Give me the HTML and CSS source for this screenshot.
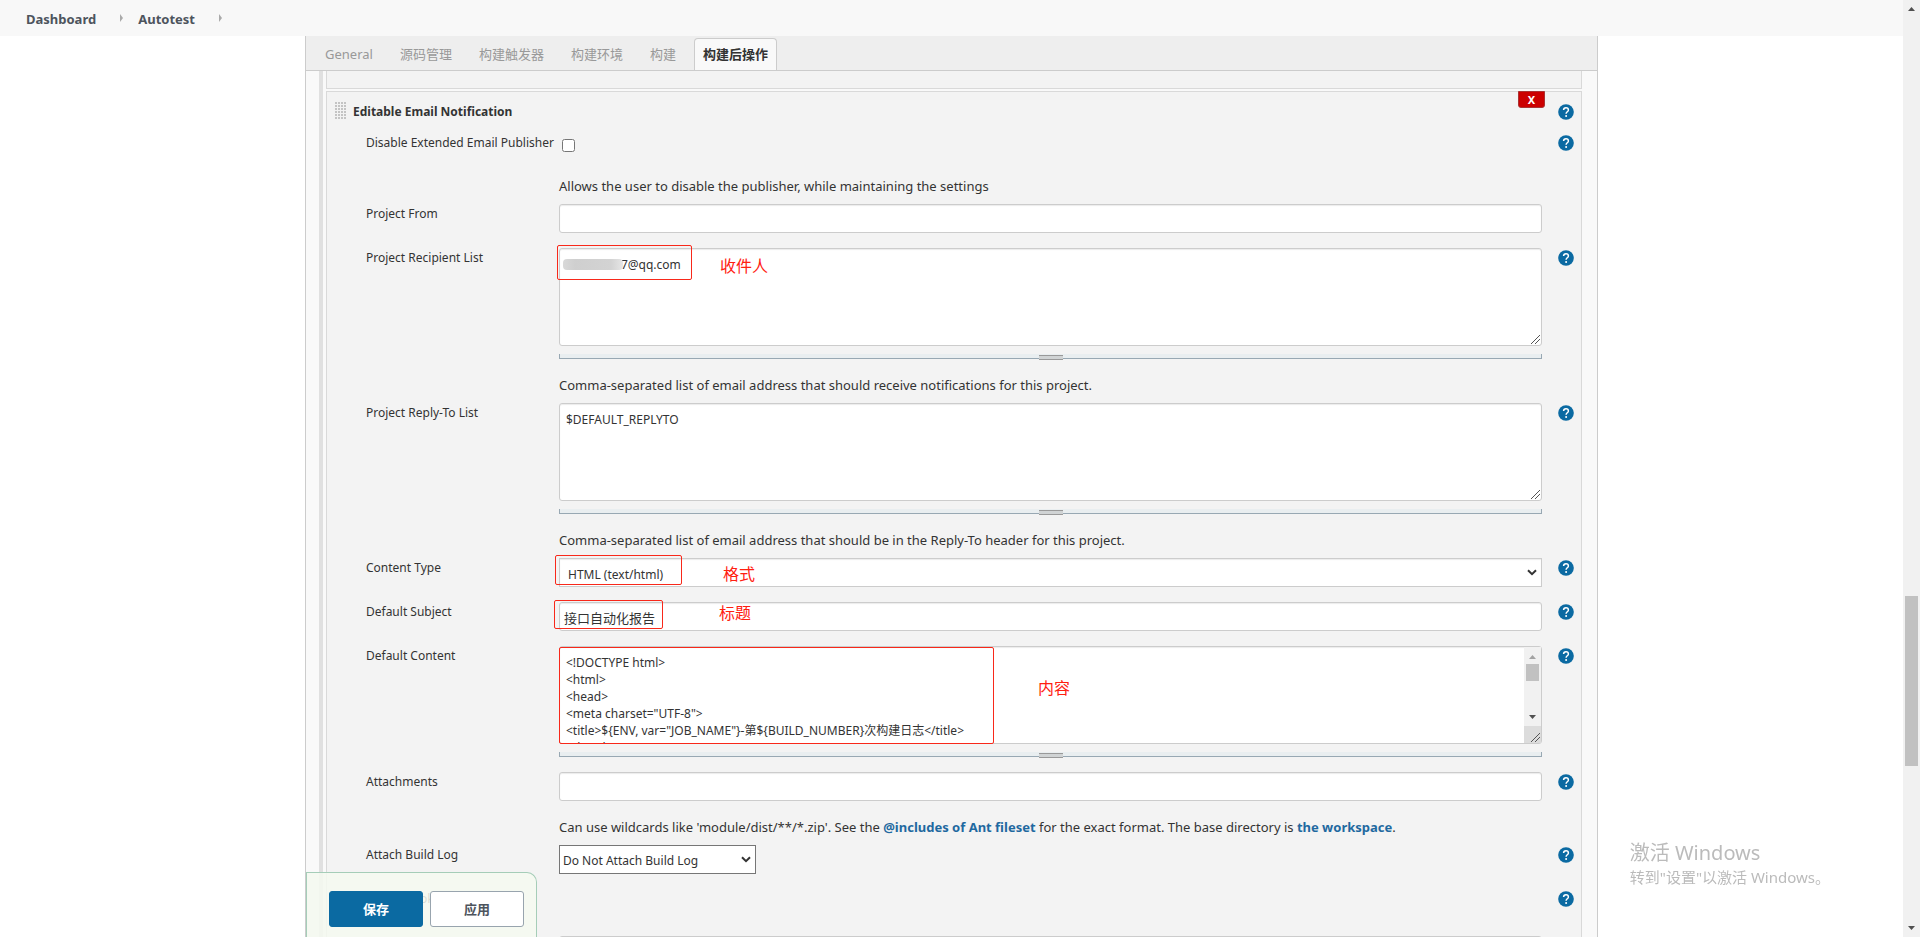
FILE: index.html
```html
<!DOCTYPE html>
<html lang="zh-CN">
<head>
    <meta charset="UTF-8">
    <meta name="viewport" content="width=device-width, initial-scale=1.0">
    <title>Autotest Config [Jenkins]</title>
    <link rel="stylesheet" href="styles.css">
</head>
<body>
    <!-- shared icons -->
    <svg class="sprite" aria-hidden="true">
        <symbol id="iconHelp" viewBox="0 0 16 16">
            <circle cx="8" cy="8" r="7.8" fill="#0b6aa2"/>
            <path d="M5.6 6.1C5.6 4.6 6.6 3.7 8 3.7s2.4.9 2.4 2.2c0 1.9-2.3 1.9-2.3 3.9" fill="none" stroke="#fff" stroke-width="1.5"/>
            <circle cx="8.1" cy="12.1" r="1" fill="#fff"/>
        </symbol>
        <symbol id="iconGrip" viewBox="0 0 9 9">
            <path d="M0 9L9 0M4 9L9 4" fill="none" stroke="#555" stroke-width="1"/>
        </symbol>
        <symbol id="iconUp" viewBox="0 0 7 4"><path d="M0 4L3.5 0L7 4z" fill="currentColor"/></symbol>
        <symbol id="iconDown" viewBox="0 0 7 4"><path d="M0 0L3.5 4L7 0z" fill="currentColor"/></symbol>
        <symbol id="iconChevron" viewBox="0 0 10 7"><path d="M1 1.2L5 5.2L9 1.2" fill="none" stroke="#333" stroke-width="2"/></symbol>
    </svg>

    <div class="page">
        <nav class="breadcrumbs">
            <a href="#">Dashboard</a>
            <span class="sep"></span>
            <a href="#">Autotest</a>
            <span class="sep"></span>
        </nav>

        <main class="config">
            <div class="tabBar">
                <a class="tab" href="#">General</a>
                <a class="tab" href="#">源码管理</a>
                <a class="tab" href="#">构建触发器</a>
                <a class="tab" href="#">构建环境</a>
                <a class="tab" href="#">构建</a>
                <a class="tab active" href="#">构建后操作</a>
            </div>

            <div class="sections">
                <div class="chunk chunkPrev"></div>

                <form class="chunk">
                    <button type="button" class="btnDelete">X</button>

                    <div class="chunkTitle">
                        <span class="dragHandle"></span>
                        <b>Editable Email Notification</b>
                        <a class="help" href="#" aria-label="Help"><svg><use href="#iconHelp"/></svg></a>
                    </div>

                    <div class="row rowCheck">
                        <label for="disabled">Disable Extended Email Publisher</label>
                        <div class="field"><input type="checkbox" id="disabled"></div>
                        <a class="help" href="#" aria-label="Help"><svg><use href="#iconHelp"/></svg></a>
                    </div>
                    <p class="desc">Allows the user to disable the publisher, while maintaining the settings</p>

                    <div class="row">
                        <label for="from">Project From</label>
                        <div class="field"><input type="text" id="from"></div>
                    </div>

                    <div class="row">
                        <label for="recipients">Project Recipient List</label>
                        <div class="field">
                            <textarea id="recipients">000000007@qq.com</textarea>
                            <svg class="grip"><use href="#iconGrip"/></svg>
                            <div class="resizer"></div>
                            <span class="mask"></span>
                            <span class="mark markRecipients"></span>
                            <span class="note noteRecipients">收件人</span>
                        </div>
                        <a class="help" href="#" aria-label="Help"><svg><use href="#iconHelp"/></svg></a>
                    </div>
                    <p class="desc">Comma-separated list of email address that should receive notifications for this project.</p>

                    <div class="row">
                        <label for="replyTo">Project Reply-To List</label>
                        <div class="field">
                            <textarea id="replyTo">$DEFAULT_REPLYTO</textarea>
                            <svg class="grip"><use href="#iconGrip"/></svg>
                            <div class="resizer"></div>
                        </div>
                        <a class="help" href="#" aria-label="Help"><svg><use href="#iconHelp"/></svg></a>
                    </div>
                    <p class="desc">Comma-separated list of email address that should be in the Reply-To header for this project.</p>

                    <div class="row">
                        <label for="contentType">Content Type</label>
                        <div class="field">
                            <select id="contentType">
                                <option>HTML (text/html)</option>
                            </select>
                            <svg class="chevron"><use href="#iconChevron"/></svg>
                            <span class="mark markType"></span>
                            <span class="note noteType">格式</span>
                        </div>
                        <a class="help" href="#" aria-label="Help"><svg><use href="#iconHelp"/></svg></a>
                    </div>

                    <div class="row">
                        <label for="subject">Default Subject</label>
                        <div class="field">
                            <input type="text" id="subject" value="接口自动化报告">
                            <span class="mark markSubject"></span>
                            <span class="note noteSubject">标题</span>
                        </div>
                        <a class="help" href="#" aria-label="Help"><svg><use href="#iconHelp"/></svg></a>
                    </div>

                    <div class="row">
                        <label for="content">Default Content</label>
                        <div class="field">
                            <textarea id="content">&lt;!DOCTYPE html&gt;
&lt;html&gt;
&lt;head&gt;
&lt;meta charset="UTF-8"&gt;
&lt;title&gt;${ENV, var="JOB_NAME"}-第${BUILD_NUMBER}次构建日志&lt;/title&gt;
&lt;/head&gt;</textarea>
                            <div class="areaScroll">
                                <svg class="arrow arrowOff"><use href="#iconUp"/></svg>
                                <span class="areaThumb"></span>
                                <svg class="arrow"><use href="#iconDown"/></svg>
                                <span class="areaCorner"></span>
                            </div>
                            <svg class="grip"><use href="#iconGrip"/></svg>
                            <div class="resizer"></div>
                            <span class="mark markContent"></span>
                            <span class="note noteContent">内容</span>
                        </div>
                        <a class="help" href="#" aria-label="Help"><svg><use href="#iconHelp"/></svg></a>
                    </div>

                    <div class="row">
                        <label for="attachments">Attachments</label>
                        <div class="field"><input type="text" id="attachments"></div>
                        <a class="help" href="#" aria-label="Help"><svg><use href="#iconHelp"/></svg></a>
                    </div>
                    <p class="desc">Can use wildcards like 'module/dist/**/*.zip'. See the <a href="#">@includes of Ant fileset</a> for the exact format. The base directory is <a href="#">the workspace</a>.</p>

                    <div class="row">
                        <label for="attachLog">Attach Build Log</label>
                        <div class="field fieldShort">
                            <select id="attachLog" class="plain">
                                <option>Do Not Attach Build Log</option>
                            </select>
                            <svg class="chevron"><use href="#iconChevron"/></svg>
                        </div>
                        <a class="help" href="#" aria-label="Help"><svg><use href="#iconHelp"/></svg></a>
                    </div>

                    <div class="row rowToken">
                        <span class="label">Content Token</span>
                        <div class="field"></div>
                        <a class="help" href="#" aria-label="Help"><svg><use href="#iconHelp"/></svg></a>
                    </div>

                    <div class="row">
                        <span class="label"></span>
                        <div class="field"><textarea aria-label="Triggers"></textarea></div>
                    </div>
                </form>
            </div>

            <div class="saveBar">
                <button type="button" class="btn btnSave">保存</button>
                <button type="button" class="btn">应用</button>
            </div>
        </main>

        <div class="watermark">
            <div class="watermarkTitle">激活 Windows</div>
            <div>转到"设置"以激活 Windows。</div>
        </div>
    </div>

    <div class="pageScroll">
        <svg class="arrow"><use href="#iconUp"/></svg>
        <span class="pageThumb"></span>
        <svg class="arrow"><use href="#iconDown"/></svg>
    </div>
</body>
</html>
```
FILE: styles.css
```css
* {
    box-sizing: border-box;
}

body {
    margin: 0;
    height: 100vh;
    overflow: hidden;
    display: flex;
    background-color: #fff;
    color: #333;
    font-family: "Noto Sans", "Noto Sans CJK SC", sans-serif;
    font-size: 12px;
}

a {
    text-decoration: none;
}

.sprite {
    position: absolute;
    width: 0;
    height: 0;
}

.page {
    flex: 1;
    min-width: 0;
    display: flex;
    flex-direction: column;
}

/* breadcrumbs */
.breadcrumbs {
    flex: none;
    height: 36px;
    padding: 2px 26px 0;
    display: flex;
    align-items: center;
    background-color: #f8f8f8;
}

.breadcrumbs a {
    color: #4d545d;
    font-size: 13px;
    font-weight: bold;
}

.sep {
    margin: 0 15px 2px 24px;
    border: 4px solid transparent;
    border-left: 3px solid #aaa;
    border-right: 0;
}

/* config panel */
.config {
    position: relative;
    flex: 1;
    min-height: 0;
    width: calc(68% - 1px);
    margin: 0 auto;
    display: flex;
    flex-direction: column;
    overflow: hidden;
    background-color: #f9f9f9;
    border: 1px solid #ccc;
    border-width: 0 1px;
}

.tabBar {
    flex: none;
    height: 35px;
    padding: 2px 10px 0;
    display: flex;
    gap: 9px;
    background-color: #eee;
    border-bottom: 1px solid #ccc;
}

.tab {
    padding: 0 8px;
    border: 1px solid transparent;
    border-bottom: 0;
    border-radius: 4px 4px 0 0;
    color: #999;
    font-size: 13px;
    line-height: 31px;
}

.active {
    background-color: #f9f9f9;
    border-color: #ccc;
    color: #333;
    font-weight: bold;
}

.sections {
    flex: 1;
    min-height: 0;
    margin: 0 15px 0 13px;
    padding-left: 3px;
    border-left: 4px solid #e0e0e0;
}

.chunk {
    position: relative;
    margin-bottom: 2px;
    padding: 10px 7px 0 8px;
    background-color: #f3f3f3;
    border: 1px solid #d9d9d9;
}

.chunkPrev {
    height: 18px;
    padding: 0;
    border-top: 0;
}

.btnDelete {
    position: absolute;
    top: -1px;
    right: 36px;
    width: 27px;
    height: 17px;
    padding: 0;
    background-color: #c00;
    border: 1px solid #a33;
    border-radius: 0 0 3px 3px;
    color: #fff;
    font-family: inherit;
    font-size: 11px;
    font-weight: bold;
    line-height: 14px;
}

.chunkTitle {
    height: 31px;
    display: flex;
    align-items: flex-start;
    line-height: 20px;
}

.chunkTitle .help {
    margin-left: auto;
}

.dragHandle {
    width: 11px;
    height: 18px;
    margin-right: 7px;
    background-color: #fff;
    background-image:
        linear-gradient(90deg, transparent 2px, #f3f3f3 2px),
        linear-gradient(#c4c4c4 2px, #f3f3f3 2px);
    background-size: 3px 3px;
}

/* form rows */
.row {
    display: grid;
    grid-template-columns: 193px 1fr 32px;
    min-height: 29px;
    margin: 0 0 15px 31px;
}

.row label,
.label {
    line-height: 20px;
    white-space: nowrap;
}

.rowCheck {
    min-height: 27px;
}

.rowToken {
    min-height: 32px;
}

.field {
    position: relative;
    min-width: 0;
}

.fieldShort {
    width: 197px;
}

.help {
    justify-self: end;
    width: 16px;
    height: 16px;
    margin-top: 2px;
}

.help svg {
    display: block;
    width: 16px;
    height: 16px;
}

.desc {
    margin: 0 0 7px 224px;
    font-size: 13px;
    line-height: 22px;
}

.desc a {
    color: #1f69a0;
    font-weight: bold;
}

input[type="checkbox"] {
    display: block;
    width: 13px;
    height: 13px;
    margin: 6px 3px;
}

input[type="text"],
textarea,
select {
    display: block;
    width: 100%;
    height: 29px;
    background-color: #fff;
    border: 1px solid #ccc;
    border-radius: 3px;
    box-shadow: inset 0 1px 1px rgba(0, 0, 0, 0.08);
    color: #333;
    font-family: inherit;
    font-size: 12px;
}

input[type="text"] {
    padding: 2px 4px 0;
    font-size: 13px;
}

textarea {
    height: 98px;
    padding: 7px 6px 0;
    line-height: 17px;
    resize: none;
    overflow: hidden;
}

select {
    appearance: none;
    padding: 3px 8px 0;
    border-radius: 0;
}

.plain {
    padding: 2px 3px 0;
    border-color: #767676;
    box-shadow: none;
    font-size: 12px;
}

.chevron {
    position: absolute;
    top: 11px;
    right: 5px;
    width: 10px;
    height: 7px;
}

.grip {
    position: absolute;
    top: 87px;
    right: 2px;
    width: 9px;
    height: 9px;
}

.resizer {
    height: 5px;
    margin-top: 8px;
    display: flex;
    justify-content: center;
    background-color: #e9eef0;
    border: 1px solid #98a8b3;
    border-top: 0;
}

.resizer::before {
    content: "";
    width: 24px;
    height: 3px;
    margin-top: 1px;
    background-color: #d0d3d4;
    border: 1px solid #999;
    border-width: 1px 0;
}

/* scrollbars */
.arrow {
    width: 7px;
    height: 4px;
    color: #505050;
}

.arrowOff {
    color: #a3a3a3;
}

.areaScroll {
    position: absolute;
    top: 1px;
    right: 1px;
    width: 17px;
    height: 96px;
    padding-top: 8px;
    display: flex;
    flex-direction: column;
    align-items: center;
    background-color: #f1f1f1;
}

.areaThumb {
    width: 13px;
    height: 17px;
    margin: 5px 0 34px;
    background-color: #c1c1c1;
}

.areaCorner {
    width: 17px;
    height: 17px;
    margin-top: auto;
    background-color: #dcdcdc;
}

.pageScroll {
    flex: none;
    width: 17px;
    padding: 7px 0;
    display: flex;
    flex-direction: column;
    align-items: center;
    background-color: #f1f1f1;
}

.pageThumb {
    width: 13px;
    height: 170px;
    margin: auto 0 160px;
    background-color: #c1c1c1;
}

/* red marks over the fields */
.mark {
    position: absolute;
    border: 1px solid #f8281a;
    border-radius: 2px;
    pointer-events: none;
}

.note {
    position: absolute;
    color: #ff2010;
    font-size: 16px;
    line-height: 20px;
    white-space: nowrap;
}

.markRecipients {
    top: -3px;
    left: -2px;
    width: 135px;
    height: 35px;
}

.noteRecipients {
    top: 8px;
    left: 161px;
}

.markType {
    top: -3px;
    left: -4px;
    width: 127px;
    height: 30px;
}

.noteType {
    top: 6px;
    left: 164px;
}

.markSubject {
    top: -2px;
    left: -5px;
    width: 109px;
    height: 29px;
}

.noteSubject {
    top: 1px;
    left: 160px;
}

.markContent {
    top: 1px;
    left: 0;
    width: 435px;
    height: 97px;
}

.noteContent {
    top: 32px;
    left: 479px;
}

.mask {
    position: absolute;
    top: 11px;
    left: 4px;
    width: 60px;
    height: 11px;
    border-radius: 4px;
    background: linear-gradient(90deg, #d9d9d9, #cfcfcf 20%, #d3d3d3 80%, #e6e6e6);
}

/* save bar */
.saveBar {
    position: absolute;
    bottom: 0;
    left: 0;
    padding: 18px 12px 10px 22px;
    display: flex;
    gap: 7px;
    background-color: rgba(245, 249, 240, 0.85);
    border: 1px solid #a5cdb8;
    border-bottom: 0;
    border-radius: 0 10px 0 0;
}

.btn {
    width: 94px;
    height: 36px;
    padding: 0;
    background-color: #fff;
    border: 1px solid #98a4ae;
    border-radius: 3px;
    color: #4d545d;
    font-family: inherit;
    font-size: 13px;
    font-weight: bold;
    line-height: 32px;
}

.btnSave {
    background-color: #0b6aa2;
    border-color: #0b6aa2;
    color: #fff;
}

.watermark {
    position: fixed;
    right: 90px;
    bottom: 49px;
    color: #bbb;
    font-size: 15px;
    line-height: 22px;
}

.watermarkTitle {
    font-size: 20px;
    line-height: 26px;
}
```
